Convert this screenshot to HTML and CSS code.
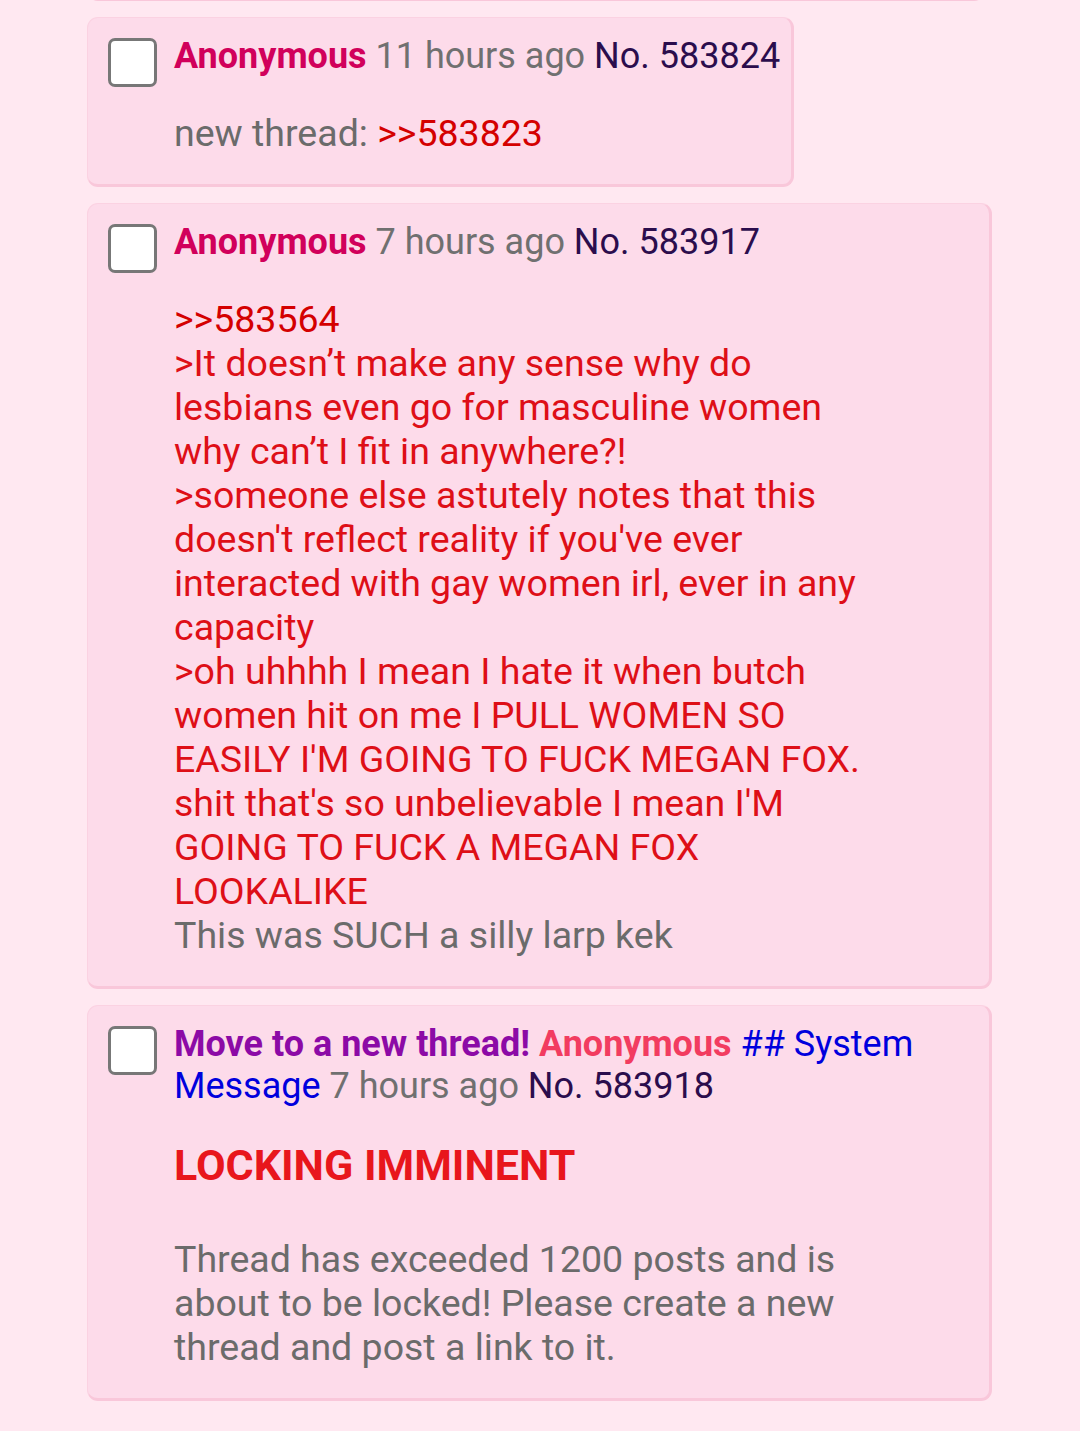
FILE: index.html
```html
<!DOCTYPE html>
<html lang="en">
<head>
  <meta charset="UTF-8" />
  <title>Thread</title>
  <meta name="viewport" content="width=device-width, initial-scale=1.0" />
  <link rel="stylesheet" href="styles.css">
</head>
<body>
  <div class="thread">
    <div class="post post-cut"></div>

    <div class="post">
      <span class="post-check"></span>
      <div class="post-main">
        <div class="post-info"><span class="name">Anonymous</span> <span class="time">11 hours ago</span> <span class="post-no">No. 583824</span></div>
        <blockquote class="post-body">new thread: <a class="quotelink">&gt;&gt;583823</a></blockquote>
      </div>
    </div>

    <div class="post">
      <span class="post-check"></span>
      <div class="post-main">
        <div class="post-info"><span class="name">Anonymous</span> <span class="time">7 hours ago</span> <span class="post-no">No. 583917</span></div>
        <blockquote class="post-body"><a class="quotelink">&gt;&gt;583564</a><br><span class="quote">&gt;It doesn’t make any sense why do lesbians even go for masculine women why can’t I fit in anywhere?!</span><br><span class="quote">&gt;someone else astutely notes that this doesn't reflect reality if you've ever interacted with gay women irl, ever in any capacity</span><br><span class="quote">&gt;oh uhhhh I mean I hate it when butch women hit on me I PULL WOMEN SO EASILY I'M GOING TO FUCK MEGAN FOX. shit that's so unbelievable I mean I'M GOING TO FUCK A MEGAN FOX LOOKALIKE</span><br>This was SUCH a silly larp kek</blockquote>
      </div>
    </div>

    <div class="post">
      <span class="post-check"></span>
      <div class="post-main">
        <div class="post-info"><span class="subject">Move to a new thread!</span> <span class="name name-sys">Anonymous</span> <span class="capcode">## System Message</span> <span class="time">7 hours ago</span> <span class="post-no">No. 583918</span></div>
        <blockquote class="post-body">
          <div class="alert">LOCKING IMMINENT</div>
          Thread has exceeded 1200 posts and is about to be locked! Please create a new thread and post a link to it.
        </blockquote>
      </div>
    </div>
  </div>
</body>
</html>
```

FILE: styles.css
```css
html, body { margin: 0; background: #ffe8f1; }
body { font-family: Roboto, 'Noto Sans', sans-serif; font-size: 37.5px; line-height: 44px; color: #6b6b6b; }
.thread { margin: 0 88px 0 87px; display: flex; flex-direction: column; align-items: flex-start; gap: 16px; padding-bottom: 30px; }
.post { display: flex; align-items: flex-start; box-sizing: border-box; max-width: 100%; background: #fddbea; border: 1px solid #fbd2e2; border-right: 3px solid #f9c7da; border-bottom: 3px solid #f9c7da; border-radius: 11px; padding: 17px 11px 29px 20px; }
.post-cut { width: 898px; height: 60px; margin-top: -59px; padding: 0; }
.post-check { flex: none; box-sizing: border-box; width: 49px; height: 49px; margin: 3px 17px 0 0; background: #fff; border: 3px solid #777; border-radius: 7px; }
.post-main { min-width: 0; }
.post-info { font-size: 36px; line-height: 42px; }
.name { color: #d1005b; font-weight: bold; }
.name-sys { color: #f23c60; }
.subject { color: #8c0aa6; font-weight: bold; }
.capcode { color: #0000dd; }
.time { color: #707070; }
.post-no { color: #2b0d4d; }
.post-body { margin: 34px 92px 0 0; }
.quotelink { color: #d40000; }
.quote { color: #de0f17; }
.alert { color: #e8161c; font-weight: bold; font-size: 43px; line-height: 49px; margin-bottom: 47px; }
```
